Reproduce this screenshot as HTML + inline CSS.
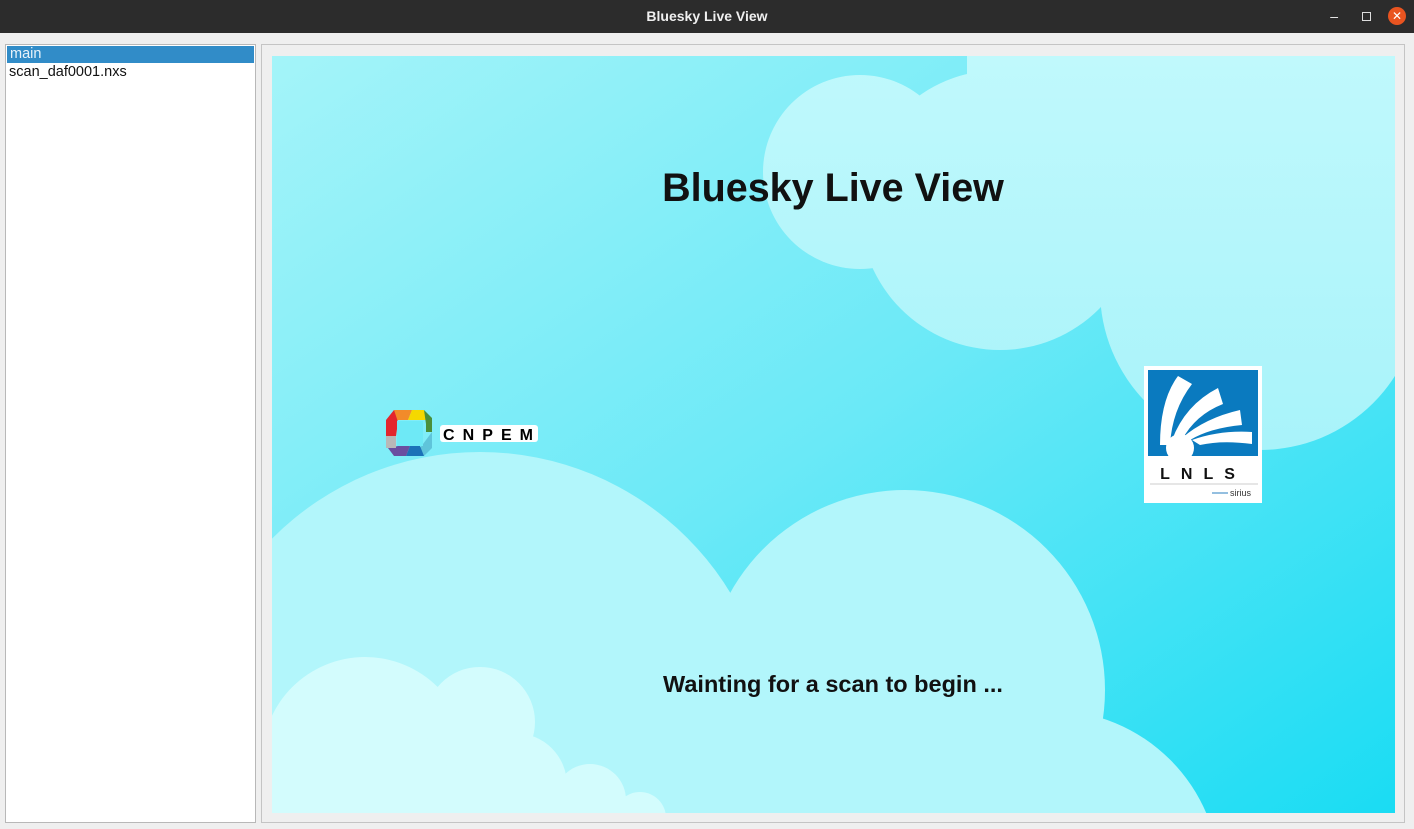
<!DOCTYPE html>
<html><head><meta charset="utf-8"><style>
body{margin:0;width:1414px;height:829px;background:#efefef;font-family:"Liberation Sans","DejaVu Sans",sans-serif;overflow:hidden;position:relative}
.title{position:absolute;left:0;top:0;width:1414px;height:33px;background:#2c2c2c;color:#f0f0f0;font-weight:bold;font-size:14px;text-align:center;line-height:32px}
.list{position:absolute;left:5px;top:44px;width:249px;height:777px;background:#fff;border:1px solid #b8b8b8}
.sel{background:#318cc8;color:#e8f2fa;font-size:14.5px;height:17px;line-height:17px;padding-left:3px;margin:1px}
.it{font-size:14.5px;color:#111;padding-left:3px;line-height:17px}
.frame{position:absolute;left:261px;top:44px;width:1142px;height:777px;border:1px solid #c4c4c4;background:#efefef}
</style></head><body>
<div class="title">Bluesky Live View
<span style="position:absolute;right:76px;top:0;font-weight:normal">–</span>
<span style="position:absolute;right:43px;top:12px;width:7px;height:7px;border:1px solid #ddd"></span>
<span style="position:absolute;right:8px;top:7px;width:18px;height:18px;border-radius:50%;background:#e95420;color:#fff;line-height:18px;font-size:12px">✕</span>
</div>
<div class="list"><div class="sel">main</div><div class="it">scan_daf0001.nxs</div></div>
<div class="frame"></div>
<svg style="position:absolute;left:272px;top:56px" width="1123" height="757" viewBox="272 56 1123 757">
<defs><linearGradient id="g" x1="0" y1="0" x2="1" y2="1"><stop offset="0" stop-color="#a4f4f9"/><stop offset="0.5" stop-color="#6ae9f7"/><stop offset="1" stop-color="#1adcf3"/></linearGradient>
<linearGradient id="cl" gradientUnits="userSpaceOnUse" x1="0" y1="56" x2="0" y2="450"><stop offset="0" stop-color="#c0f9fc"/><stop offset="1" stop-color="#a8f3fa"/></linearGradient>
<clipPath id="c"><rect x="272" y="56" width="1123" height="757"/></clipPath></defs>
<g clip-path="url(#c)">
<rect x="272" y="56" width="1123" height="757" fill="url(#g)"/>
<g fill="url(#cl)">
<circle cx="860" cy="172" r="97"/><circle cx="1000" cy="210" r="140"/><circle cx="1260" cy="290" r="160"/>
<rect x="1000" y="56" width="400" height="234"/><rect x="967" y="56" width="100" height="40"/>
</g>
<g fill="#b2f6fb">
<circle cx="480" cy="745" r="293"/><circle cx="905" cy="690" r="200"/><circle cx="1050" cy="880" r="170"/>
</g>
<g fill="#d3fcfd">
<circle cx="365" cy="760" r="103"/><circle cx="480" cy="722" r="55"/><circle cx="515" cy="785" r="52"/><circle cx="590" cy="800" r="36"/><circle cx="640" cy="818" r="26"/><rect x="272" y="790" width="330" height="30"/>
</g>
</g>
<text x="833" y="201" text-anchor="middle" font-family="Liberation Sans,sans-serif" font-weight="bold" font-size="39.5" fill="#111">Bluesky Live View</text>
<text x="833" y="692" text-anchor="middle" font-family="Liberation Sans,sans-serif" font-weight="bold" font-size="23.5" fill="#111">Wainting for a scan to begin ...</text>
<g>
<polygon points="394,410 412,410 408,420 396,420" fill="#f28b2a"/>
<polygon points="412,410 424,410 428,420 408,420" fill="#f5d800"/>
<polygon points="424,410 432,418 432,432 426,432 426,424" fill="#4a8f3a"/>
<polygon points="432,432 432,448 424,456 420,448 426,440" fill="#5fc4da"/>
<polygon points="424,456 406,456 410,446 420,446" fill="#1b72b8"/>
<polygon points="406,456 394,456 388,448 398,446 410,446" fill="#6a4ea0"/>
<polygon points="386,436 386,448 396,448 396,436" fill="#b8b8b8"/>
<polygon points="386,420 386,436 396,436 398,422 394,410" fill="#e3262d"/>
<rect x="397" y="421" width="26" height="25" fill="#6ee9f6"/>
<rect x="440" y="425" width="98" height="17" rx="3" fill="#fff"/>
<text x="443" y="440" font-family="Liberation Sans,sans-serif" font-weight="bold" font-size="16" fill="#000" textLength="90">CNPEM</text>
</g>
<g>
<rect x="1144" y="366" width="118" height="137" fill="#fff"/>
<rect x="1148" y="370" width="110" height="86" fill="#0a7abf"/>
<path d="M1160 445 Q1160 400 1178 376 L1192 384 Q1172 410 1170 445 Z" fill="#fff"/>
<path d="M1172 440 Q1185 405 1218 388 L1223 404 Q1195 415 1182 440 Z" fill="#fff"/>
<path d="M1182 438 Q1205 418 1240 410 L1242 425 Q1210 428 1190 440 Z" fill="#fff"/>
<path d="M1192 440 Q1220 430 1252 432 L1252 444 Q1222 440 1200 445 Z" fill="#fff"/>
<circle cx="1180" cy="448" r="14" fill="#fff"/>
<text x="1203" y="479" text-anchor="middle" font-family="Liberation Sans,sans-serif" font-weight="bold" font-size="16" fill="#111" letter-spacing="11">LNLS</text>
<line x1="1150" y1="484" x2="1258" y2="484" stroke="#ccc"/>
<line x1="1212" y1="493" x2="1228" y2="493" stroke="#2a7fc0"/>
<text x="1230" y="496" font-family="Liberation Sans,sans-serif" font-size="9" fill="#333">sirius</text>
</g>
</svg>
</body></html>
